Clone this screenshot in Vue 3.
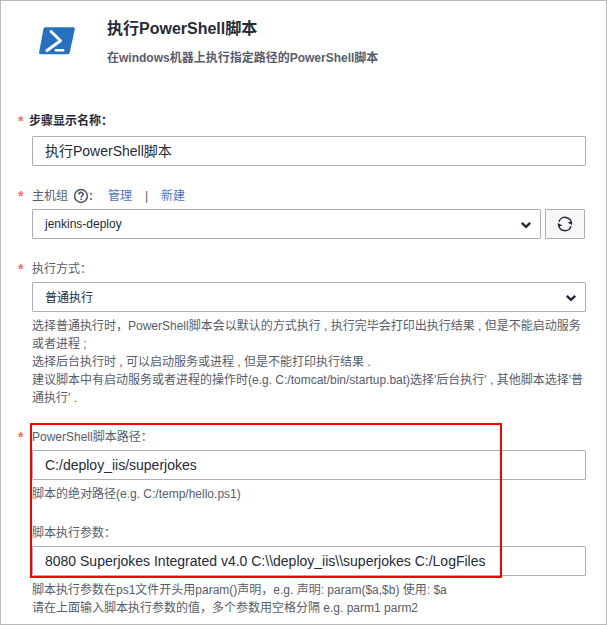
<script setup>
import { ref } from 'vue'

const stepName = ref('执行PowerShell脚本')
const scriptPath = ref('C:/deploy_iis/superjokes')
const scriptArgs = ref('8080 Superjokes Integrated v4.0 C:\\\\deploy_iis\\\\superjokes C:/LogFiles')

const modeHelp = [
  '选择普通执行时，PowerShell脚本会以默认的方式执行 , 执行完毕会打印出执行结果 , 但是不能启动服务',
  '或者进程 ;',
  '选择后台执行时 , 可以启动服务或进程 , 但是不能打印执行结果 .',
  "建议脚本中有启动服务或者进程的操作时(e.g. C:/tomcat/bin/startup.bat)选择'后台执行' , 其他脚本选择'普",
  "通执行' ."
]
const argsHelp = [
  '脚本执行参数在ps1文件开头用param()声明，e.g. 声明: param($a,$b) 使用: $a',
  '请在上面输入脚本执行参数的值，多个参数用空格分隔 e.g. parm1 parm2'
]
</script>

<template>
  <main class="panel">
    <header class="head">
      <svg class="logo" width="38" height="30" viewBox="0 0 38 30">
        <path d="M7.2 1.3H35.4Q37.2 1.3 36.8 3L31.7 26.6Q31.3 28.3 29.5 28.3H2.4Q.7 28.3 1.1 26.6L5.4 3Q5.8 1.3 7.2 1.3Z" fill="#2671be" />
        <path d="M13.1 5.5L22.5 14.8L9 24.5" fill="none" stroke="#fff" stroke-width="3" stroke-linecap="round" stroke-linejoin="round" />
        <path d="M17.8 24.3H25.2" stroke="#fff" stroke-width="2.4" stroke-linecap="round" />
      </svg>
      <div class="titles">
        <h1>执行PowerShell脚本</h1>
        <p>在windows机器上执行指定路径的PowerShell脚本</p>
      </div>
    </header>

    <section class="field name">
      <div class="label strong"><i>*</i><span>步骤显示名称：</span></div>
      <input v-model="stepName" class="box" />
    </section>

    <section class="field host">
      <div class="label">
        <i>*</i><span>主机组</span>
        <svg class="help-icon" width="16" height="16" viewBox="0 0 16 16" fill="none" stroke="#4b5263">
          <circle cx="8" cy="8" r="6.4" stroke-width="1.5" />
          <path d="M5.9 6.5C5.9 3.7 10.2 3.8 10.2 6.3C10.2 7.8 8.1 7.8 8.1 9.5" stroke-width="1.6" />
          <path d="M7.3 11.3H8.9" stroke-width="1.6" />
        </svg>
        <span class="colon">:</span>
        <a>管理</a><span class="bar">|</span><a>新建</a>
      </div>
      <div class="row">
        <div class="box select">
          <span>jenkins-deploy</span>
          <svg class="chevron" width="12" height="8" viewBox="0 0 12 8"><path d="M1.8 1.8L6 5.8L10.2 1.8" fill="none" stroke="#252b3a" stroke-width="2.5" /></svg>
        </div>
        <button class="refresh">
          <svg width="16" height="16" viewBox="0 0 16 16">
            <path d="M1.9 5.8A6.4 6.4 0 0 1 14.4 7.8M14.1 10.2A6.4 6.4 0 0 1 1.6 8.2" fill="none" stroke="#252b3a" stroke-width="1.5" />
            <path d="M10.4 6.6L15.1 5.6V8.9ZM5.6 9.4L.9 10.4V7.1Z" fill="#252b3a" />
          </svg>
        </button>
      </div>
    </section>

    <section class="field mode">
      <div class="label"><i>*</i><span>执行方式：</span></div>
      <div class="box select">
        <span>普通执行</span>
        <svg class="chevron" width="12" height="8" viewBox="0 0 12 8"><path d="M1.8 1.8L6 5.8L10.2 1.8" fill="none" stroke="#252b3a" stroke-width="2.5" /></svg>
      </div>
      <div class="help"><p v-for="line in modeHelp" :key="line">{{ line }}</p></div>
    </section>

    <section class="field path">
      <div class="label"><i>*</i><span>PowerShell脚本路径：</span></div>
      <input v-model="scriptPath" class="box" />
      <div class="help"><p>脚本的绝对路径(e.g. C:/temp/hello.ps1)</p></div>
      <div class="highlight"></div>
    </section>

    <section class="field args">
      <div class="label"><span>脚本执行参数：</span></div>
      <input v-model="scriptArgs" class="box" />
      <div class="help"><p v-for="line in argsHelp" :key="line">{{ line }}</p></div>
    </section>
  </main>
</template>

<style>
body {
  margin: 0;
  background: #fff;
}
</style>

<style scoped>
* {
  box-sizing: border-box;
}
.panel {
  width: 607px;
  height: 625px;
  border: 1px solid #bababa;
  overflow: hidden;
  color: #575d6c;
  font: 12px/18px "Liberation Sans", "Noto Sans CJK SC", sans-serif;
}
.head {
  display: flex;
  height: 109px;
  padding: 16px 0 0 37px;
}
.logo {
  margin-top: 9px;
}
.titles {
  margin-left: 31px;
}
h1 {
  margin: 0;
  font-size: 16px;
  line-height: 24px;
  font-weight: 700;
  color: #252b3a;
}
p {
  margin: 0;
  height: 18px;
  white-space: nowrap;
}
.titles p {
  margin-top: 8px;
  font-weight: 700;
}
.field {
  position: relative;
  padding-left: 31px;
}
.name {
  height: 76px;
}
.host {
  height: 73px;
}
.mode {
  height: 168px;
}
.path {
  height: 96px;
}
.label {
  display: flex;
  align-items: center;
  height: 20px;
  margin: 0 0 6px -15px;
  white-space: nowrap;
}
.host .label,
.mode .label,
.path .label {
  margin-bottom: 3px;
}
.args .label {
  margin: 0 0 3px;
}
.label i {
  width: 15px;
  padding: 0 0 0 1px;
  font-style: normal;
  font-size: 14px;
  font-weight: 700;
  color: #f66f6a;
}
.strong {
  height: 22px;
  margin-bottom: 4px;
  font-weight: 700;
  color: #252b3a;
}
.strong i {
  width: 12px;
}
.help-icon {
  margin-left: 5px;
}
.colon {
  width: 19px;
  font-weight: 700;
}
.label a {
  color: #526ecc;
}
.bar {
  width: 29px;
  text-align: center;
}
.box {
  display: block;
  width: 554px;
  height: 30px;
  padding: 0 12px;
  border: 1px solid #adb0b8;
  border-radius: 1px;
  background: #fff;
  color: #252b3a;
  font: 14px "Liberation Sans", "Noto Sans CJK SC", sans-serif;
  outline: none;
}
.name .box {
  padding-bottom: 2px;
}
.select {
  display: flex;
  align-items: center;
  justify-content: space-between;
  padding-right: 8px;
  font-size: 12px;
}
.mode .select span {
  padding-bottom: 1px;
}
.chevron {
  margin-top: 2px;
}
.row {
  display: flex;
  gap: 4px;
}
.row .select {
  width: 509px;
}
.refresh {
  display: flex;
  align-items: center;
  justify-content: center;
  width: 40px;
  height: 30px;
  padding: 0;
  border: 1px solid #adb0b8;
  border-radius: 1px;
  background: #f8f8f8;
}
.help {
  padding-top: 5px;
}
.highlight {
  position: absolute;
  left: 29px;
  top: -4px;
  width: 472px;
  height: 155px;
  border: 2px solid #f00;
  z-index: 1;
}
</style>
